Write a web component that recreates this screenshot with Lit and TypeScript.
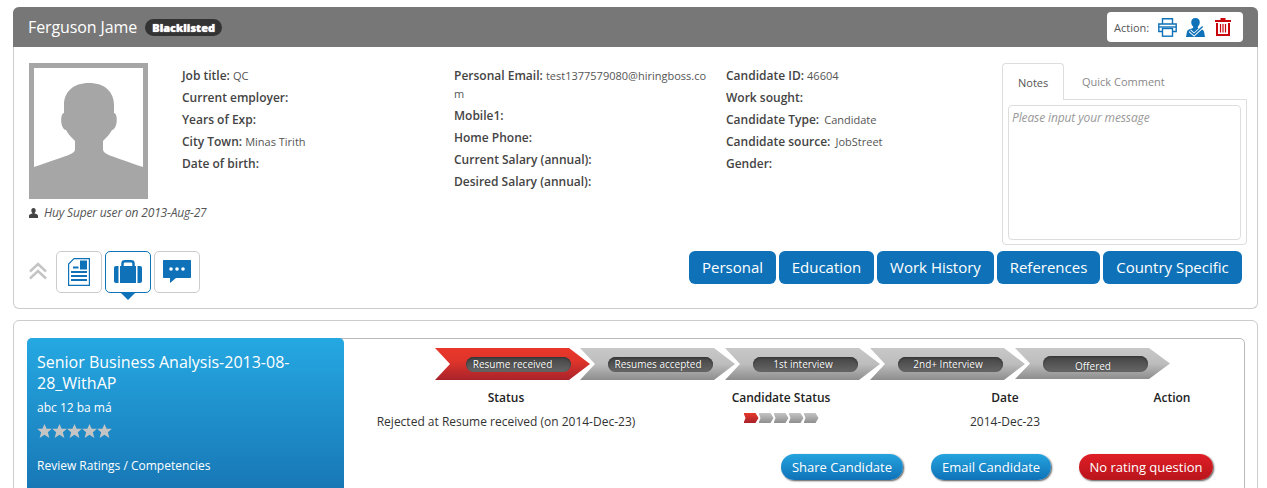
import { LitElement, html, css, svg } from "lit";
import { customElement } from "lit/decorators.js";

const silhouette = svg`<svg class="photo" viewBox="0 0 119 136" width="119" height="136">
  <rect width="119" height="136" fill="#a6a6a6"/>
  <rect x="5" y="5" width="109" height="110" fill="#fff"/>
  <path fill="#a6a6a6" filter="url(#sb)" d="M60 20C44 20 35 29 35 42V50C31 50 31 66 37 67C39 71 43 75 46 78V86C46 91 40 92 5 104V136H114V104C79 92 74 91 74 86V78C77 75 81 71 83 67C89 66 89 50 85 50V42C85 29 76 20 60 20Z"/>
  <defs><filter id="sb"><feGaussianBlur stdDeviation="0.5"/></filter></defs>
</svg>`;

const printIcon = svg`<svg width="19" height="19" viewBox="0 0 19 19" fill="none" stroke="#0f72b8" stroke-width="1.4">
  <path d="M4.500 6V.8H14.500V6"/><path d="M4.500 13.500H.8V6H18.200V13.500H14.500"/><path d="M.8 9H18.200"/><rect x="4.500" y="10.500" width="10" height="7.700"/>
</svg>`;
const personIcon = svg`<svg width="19" height="19" viewBox="0 0 20 20">
  <path fill="#0f72b8" d="M10 0C7 0 5.500 2 5.500 4.500C5.500 6.500 6.300 8 7.500 9V10.500C5 11.500 1.500 12 1 14.500L0 20H20L19 14.500C18.500 12 15 11.500 12.500 10.500V9C13.700 8 14.500 6.500 14.500 4.500C14.500 2 13 0 10 0Z"/>
  <path fill="none" stroke="#fff" stroke-width="3.400" d="M4 13.500L8.500 17.500L17.500 9"/>
  <path fill="none" stroke="#0f72b8" stroke-width="1.500" d="M4 13.500L8.500 17.500L17.500 9"/>
</svg>`;
const trashIcon = svg`<svg width="16" height="18" viewBox="0 0 16 18">
  <path fill="#c8060c" d="M5.500 0H10.500V2H16V4H0V2H5.500Z"/>
  <path fill="none" stroke="#c8060c" stroke-width="2" d="M2 5V17H14V5"/>
  <path fill="none" stroke="#c8060c" stroke-width="1.200" d="M5.500 6V14.500M8 6V14.500M10.500 6V14.500"/>
</svg>`;
const userIcon = svg`<svg class="uic" width="9" height="10" viewBox="0 0 9 10"><path fill="#444" d="M4.500 0C3 0 2.300 1 2.300 2.400C2.300 3.500 2.800 4.400 3.400 4.900V5.600C2 6 .3 6.300 0 7.500V10H9V7.500C8.700 6.300 7 6 5.600 5.600V4.900C6.200 4.400 6.700 3.500 6.700 2.400C6.700 1 6 0 4.500 0Z"/></svg>`;
const chevrons = svg`<svg width="18" height="18" viewBox="0 0 18 18" fill="none" stroke="#c4c4c4" stroke-width="2.400">
  <path d="M1 9.500L9 2L17 9.500"/><path d="M1 16.500L9 9L17 16.500"/>
</svg>`;
const docIcon = svg`<svg width="22" height="28" viewBox="0 0 22 28">
  <path fill="none" stroke="#0f72b8" stroke-width="1.200" d="M6 .6H21.400V27.400H.6V6Z"/>
  <rect x="12" y="2.500" width="7" height="9" fill="#0f72b8"/>
  <path fill="#0f72b8" d="M5 8.500H10.500V10.500H5ZM3 13H19V15H3ZM3 17H19V19H3ZM3 21H19V23H3Z"/>
</svg>`;
const caseIcon = svg`<svg width="28" height="24" viewBox="0 0 28 24">
  <path fill="none" stroke="#0f72b8" stroke-width="2.500" d="M8.500 7V3.500C8.500 2 9.500 1.300 11 1.300H17C18.500 1.300 19.500 2 19.500 3.500V7"/>
  <path fill="#0f72b8" d="M2 6H4.500V23H2C.8 23 0 22.200 0 21V8C0 6.800 .8 6 2 6ZM6 6H22V23H6ZM23.500 6H26C27.200 6 28 6.800 28 8V21C28 22.200 27.200 23 26 23H23.500Z"/>
</svg>`;
const chatIcon = svg`<svg width="28" height="24" viewBox="0 0 28 24">
  <path fill="#0f72b8" d="M1 0H27C27.600 0 28 .4 28 1V17C28 17.600 27.600 18 27 18H13L7 23V18H1C.4 18 0 17.600 0 17V1C0 .4 .4 0 1 0Z"/>
  <circle cx="8" cy="9" r="1.800" fill="#fff"/><circle cx="14" cy="9" r="1.800" fill="#fff"/><circle cx="20" cy="9" r="1.800" fill="#fff"/>
</svg>`;
const star = svg`<svg width="15" height="14" viewBox="0 0 24 23"><path fill="#c4c4c4" d="M12 0L15.500 8H24L17.500 13.500L20 23L12 17.500L4 23L6.500 13.500L0 8H8.500Z"/></svg>`;

@customElement("app-root")
export class AppRoot extends LitElement {
  static styles = css`
    :host { display: block; height: 488px; overflow: hidden; background: #fff;
      font-family: "Open Sans", "Liberation Sans", sans-serif; font-size: 12px; color: #444;
      box-sizing: border-box; padding: 7px 9px 0 13px; }
    * { box-sizing: border-box; }
    .panel { border: 1px solid #ccc; border-radius: 6px; }
    .top { height: 302px; margin-bottom: 11px; border-top: 0; }
    .head { height: 40px; margin: 0 -1px; background: #777; border-radius: 6px 6px 0 0; color: #fff;
      display: flex; align-items: center; padding: 0 15px; }
    .name { font-size: 16px; margin-right: 8px; letter-spacing: -.1px; }
    .badge { background: #333; border-radius: 9px; height: 17px; width: 77px; font-size: 11px; font-weight: 800;
      text-align: center; line-height: 17px; text-shadow: 0 0 1px #fff; }
    .actions { margin-left: auto; background: #fff; border-radius: 4px; width: 136px; height: 30px; display: flex;
      align-items: center; color: #555; font-size: 11px; padding-left: 7px; }
    .actions span { width: 44px; flex: none; }
    .actions svg { margin-right: 9px; flex: none; }
    .actions svg:nth-of-type(2) { margin-right: 10px; }
    .info { display: flex; padding: 16px 0 0 15px; height: 204px; }
    .photo-col { width: 153px; flex: none; }
    .photo { display: block; }
    .by { display: flex; align-items: center; gap: 6px; margin-top: 6px; font-size: 12px; letter-spacing: -.16px; font-style: italic; color: #555; line-height: 15px; white-space: nowrap; }
    .uic { flex: none; }
    .col { width: 272px; flex: none; padding-top: 2px; line-height: 22px; font-weight: 600; color: #444; }
    .col div { height: 22px; }
    .col .wrap { height: auto; line-height: 18px; padding: 2px 0; }
    .col .v { font-weight: 400; font-size: 11px; color: #555; }
    .col.c2 { padding-right: 16px; }
    .col.c3 { width: 276px; }
    .col .pad { margin-left: 2px; }
    .notes { width: 245px; flex: none; }
    .tabs { display: flex; height: 36px; }
    .tab { height: 37px; line-height: 37px; padding: 0 18px; font-size: 11px; color: #888; }
    .tab.on { border: 1px solid #ddd; border-bottom: 0; border-radius: 4px 4px 0 0; background: #fff; color: #555; width: 62px; padding: 0 15px; position: relative; z-index: 1; }
    .tabbody { border: 1px solid #ddd; height: 146px; padding: 5px; border-radius: 0 0 4px 4px; }
    .ta { border: 1px solid #ddd; border-radius: 4px; height: 135px; padding: 3px; font-size: 12px; letter-spacing: -.12px; font-style: italic; color: #999; line-height: 17px; }
    .bar { display: flex; padding: 0 15px 0 15px; align-items: flex-start; }
    .chev { width: 27px; padding-top: 11px; }
    .ib { width: 46px; height: 42px; border: 1px solid #ccc; border-radius: 5px; margin-right: 3px; display: flex; align-items: center;
      justify-content: center; position: relative; }
    .ib.on { border-color: #0f72b8; }
    .ib.on::after { content: ""; position: absolute; left: 14px; bottom: -8px; border: 8px solid transparent; border-bottom: 0; border-top: 8px solid #0f72b8; }
    .btns { margin-left: auto; display: grid; grid-template-columns: 87px 95px 117px 103px 139px; gap: 3px; }
    .b { height: 33px; line-height: 32px; text-align: center; white-space: nowrap; background: #0f72b8; color: #fff; border-radius: 6px; font-size: 15px; }
    .bottom { height: 300px; padding: 17px 12px 0 13px; }
    .inner { border: 1px solid #bbb; border-radius: 5px; display: flex; min-height: 200px; }
    .blue { width: 317px; flex: none; margin: -1px 0 0 -1px; background: linear-gradient(#25a8e2, #1878b6 75%, #166fae); border-radius: 5px 5px 0 0;
      color: #fff; padding: 14px 10px; }
    .t { font-size: 16px; line-height: 21px; }
    .s { margin-top: 3px; line-height: 22px; }
    .stars { display: flex; margin-top: 5px; height: 16px; }
    .rev { margin-top: 17px; line-height: 18px; }
    .right { flex: 1; min-width: 0; }
    .steps { display: flex; padding: 9px 0 0 91px; height: 50px; }
    .step { height: 32px; width: 155px; flex: none; margin-right: -10px; display: flex; align-items: center;
      background: linear-gradient(#c8c8c8, #bdbdbd 50%, #8d8d8d);
      clip-path: polygon(0 0, 134px 0, 155px 50%, 134px 100%, 0 100%, 15px 50%); padding-left: 28px; }
    .step.first { background: linear-gradient(#e8382a, #e0342a 40%, #a8232b); padding-left: 31px; }
    .step.first .pill { padding-right: 12px; }
    .step.last { margin-right: 0; height: 31px; }
    .step.last .pill { height: 16px; line-height: 20px; }
    .pill { width: 105px; height: 15px; border-radius: 8px; background: linear-gradient(#444, #666); color: #fff; font-size: 10px; text-align: center;
      line-height: 15px; padding-right: 5px; white-space: nowrap; box-shadow: inset 0 1px 2px #333; text-shadow: 0 0 1px #222; }
    .g { display: grid; grid-template-columns: 278px 272px 176px 158px; margin-left: 23px; text-align: center; color: #333; }
    .g .h { font-weight: 600; line-height: 18px; color: #222; margin-bottom: 6px; }
    .g .c { line-height: 18px; }
    .mini { display: flex; justify-content: center; height: 18px; }
    .m { width: 15px; height: 10px; background: linear-gradient(#c4c4c4, #8e8e8e); clip-path: polygon(0 0, 12px 0, 15px 50%, 12px 100%, 0 100%, 2px 50%); }
    .m.first { background: linear-gradient(#e8382a, #a8232b); }
    .acts { display: flex; justify-content: flex-end; gap: 28px; padding: 23px 31px 0 0; }
    .act { height: 26px; border-radius: 13px; line-height: 26px; color: #fff; font-size: 13px; text-align: center; box-shadow: 1px 1px 2px #555;
      background: linear-gradient(#25a3de, #0f72b8); }
    .act.red { background: linear-gradient(#e01e26, #b8151b); }
    .w122 { width: 122px; } .w120 { width: 120px; } .w134 { width: 134px; }
  `;

  render() {
    return html`
      <div class="panel top">
        <div class="head">
          <div class="name">Ferguson Jame</div>
          <div class="badge">Blacklisted</div>
          <div class="actions"><span>Action:</span>${printIcon}${personIcon}${trashIcon}</div>
        </div>
        <div class="info">
          <div class="photo-col">
            ${silhouette}
            <div class="by">${userIcon}<span>Huy Super user on 2013-Aug-27</span></div>
          </div>
          <div class="col c1">
            <div>Job title: <span class="v">QC</span></div>
            <div>Current employer:</div>
            <div>Years of Exp:</div>
            <div>City Town: <span class="v">Minas Tirith</span></div>
            <div>Date of birth:</div>
          </div>
          <div class="col c2">
            <div class="wrap">Personal Email: <span class="v">test1377579080@hiringboss.co</span><br /><span class="v">m</span></div>
            <div>Mobile1:</div>
            <div>Home Phone:</div>
            <div>Current Salary (annual):</div>
            <div>Desired Salary (annual):</div>
          </div>
          <div class="col c3">
            <div>Candidate ID: <span class="v">46604</span></div>
            <div>Work sought:</div>
            <div>Candidate Type: <span class="v pad">Candidate</span></div>
            <div>Candidate source: <span class="v pad">JobStreet</span></div>
            <div>Gender:</div>
          </div>
          <div class="notes">
            <div class="tabs"><div class="tab on">Notes</div><div class="tab">Quick Comment</div></div>
            <div class="tabbody"><div class="ta">Please input your message</div></div>
          </div>
        </div>
        <div class="bar">
          <div class="chev">${chevrons}</div>
          <div class="ib">${docIcon}</div>
          <div class="ib on">${caseIcon}</div>
          <div class="ib">${chatIcon}</div>
          <div class="btns">
            ${["Personal", "Education", "Work History", "References", "Country Specific"].map((t) => html`<div class="b">${t}</div>`)}
          </div>
        </div>
      </div>
      <div class="panel bottom">
        <div class="inner">
          <div class="blue">
            <div class="t">Senior Business Analysis-2013-08-28_WithAP</div>
            <div class="s">abc 12 ba má</div>
            <div class="stars">${star}${star}${star}${star}${star}</div>
            <div class="rev">Review Ratings / Competencies</div>
          </div>
          <div class="right">
            <div class="steps">
              <div class="step first"><div class="pill">Resume received</div></div>
              <div class="step"><div class="pill">Resumes accepted</div></div>
              <div class="step"><div class="pill">1st interview</div></div>
              <div class="step"><div class="pill">2nd+ Interview</div></div>
              <div class="step last"><div class="pill">Offered</div></div>
            </div>
            <div class="g">
              <div class="h">Status</div><div class="h">Candidate Status</div><div class="h">Date</div><div class="h">Action</div>
              <div class="c">Rejected at Resume received (on 2014-Dec-23)</div>
              <div class="mini"><div class="m first"></div><div class="m"></div><div class="m"></div><div class="m"></div><div class="m"></div></div>
              <div class="c">2014-Dec-23</div><div></div>
            </div>
            <div class="acts">
              <div class="act w122">Share Candidate</div>
              <div class="act w120">Email Candidate</div>
              <div class="act red w134">No rating question</div>
            </div>
          </div>
        </div>
      </div>
    `;
  }
}
